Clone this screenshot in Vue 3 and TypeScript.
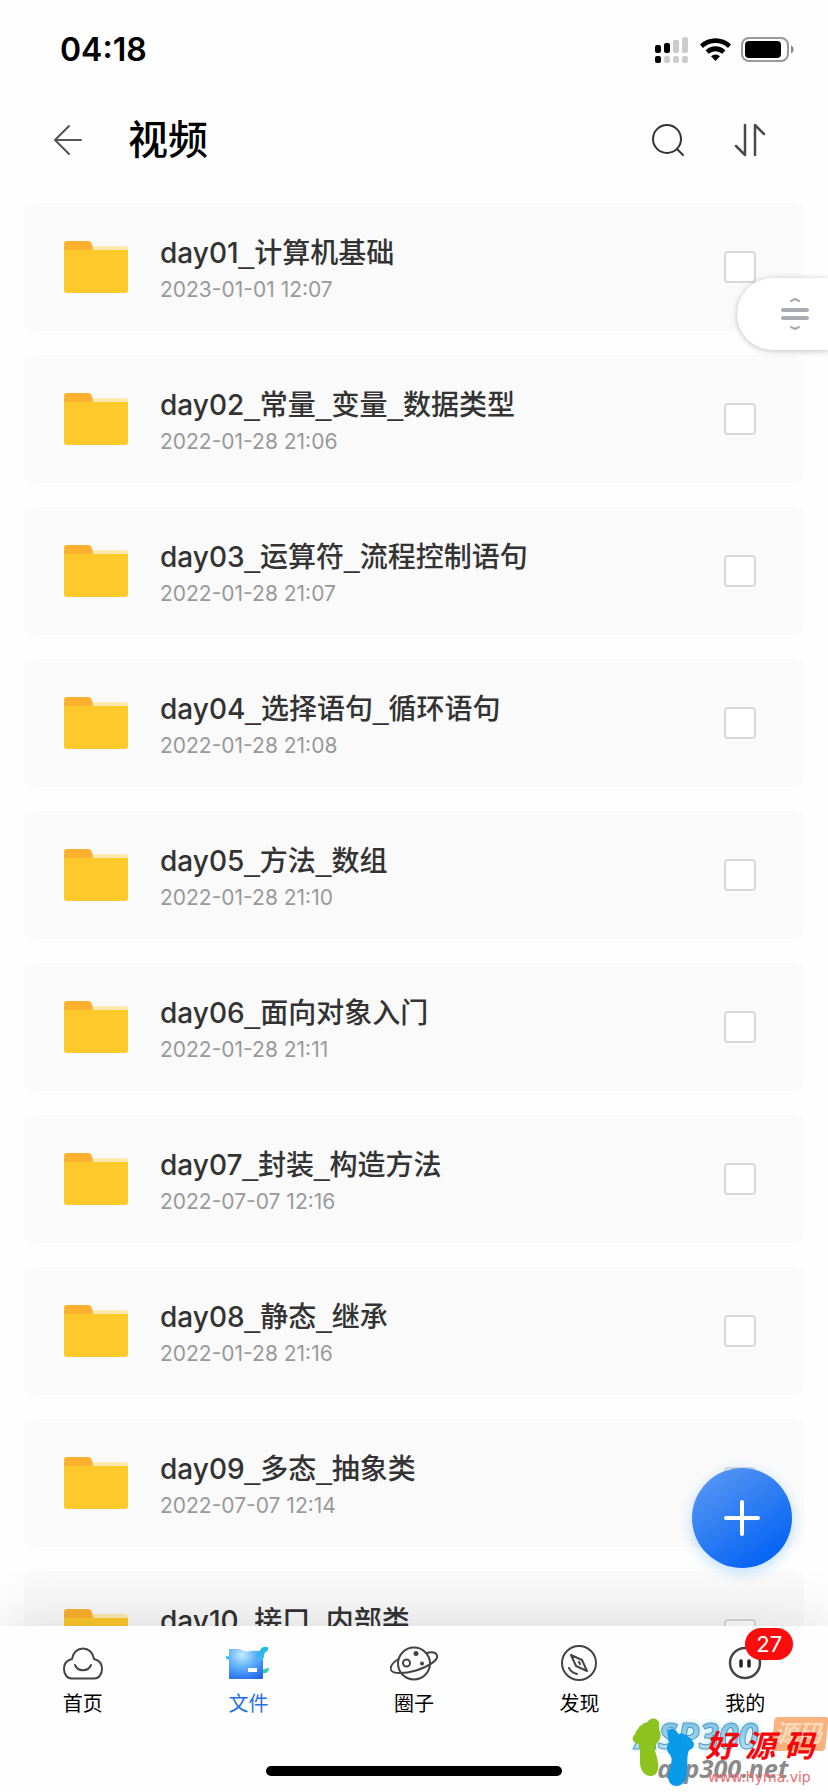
<script setup lang="ts">
import { ref } from 'vue'

interface Folder {
  name: string
  date: string
  checked: boolean
}

const folders = ref<Folder[]>([
  { name: 'day01_计算机基础', date: '2023-01-01 12:07', checked: false },
  { name: 'day02_常量_变量_数据类型', date: '2022-01-28 21:06', checked: false },
  { name: 'day03_运算符_流程控制语句', date: '2022-01-28 21:07', checked: false },
  { name: 'day04_选择语句_循环语句', date: '2022-01-28 21:08', checked: false },
  { name: 'day05_方法_数组', date: '2022-01-28 21:10', checked: false },
  { name: 'day06_面向对象入门', date: '2022-01-28 21:11', checked: false },
  { name: 'day07_封装_构造方法', date: '2022-07-07 12:16', checked: false },
  { name: 'day08_静态_继承', date: '2022-01-28 21:16', checked: false },
  { name: 'day09_多态_抽象类', date: '2022-07-07 12:14', checked: false },
  { name: 'day10_接口_内部类', date: '', checked: false },
])

// Splits a name into words and the underscores between them.
const parts = (name: string): string[] => name.split(/(_)/)

const tabs = [
  { id: 'home', label: '首页' },
  { id: 'files', label: '文件' },
  { id: 'circle', label: '圈子' },
  { id: 'discover', label: '发现' },
  { id: 'mine', label: '我的' },
]
const active = ref('files')
const unread = 27
</script>

<template>
  <div class="app">
    <div class="status">
      <span class="clock">04:18</span>
      <svg class="status-icons" width="140" height="28" viewBox="0 0 140 28" aria-hidden="true">
        <rect x="1" y="9" width="6" height="8" rx="2" />
        <rect x="10" y="7" width="6" height="10" rx="2" />
        <rect x="19" y="4" width="6" height="13" rx="2" fill="#ccc" />
        <rect x="28" y="1" width="6" height="16" rx="2" fill="#ccc" />
        <rect x="1" y="20" width="6" height="7" rx="2" />
        <g fill="#ccc">
          <rect x="10" y="20" width="6" height="7" rx="2.5" />
          <rect x="19" y="20" width="6" height="7" rx="2.5" />
          <rect x="28" y="20" width="6" height="7" rx="2.5" />
        </g>
        <path d="M46 8.6a22 22 0 0 1 31 0l-3 3.4a18 18 0 0 0-25 0z" />
        <path d="M51.6 14.4a14 14 0 0 1 19.8 0l-3.2 3.4a10 10 0 0 0-13.4 0z" />
        <path d="M57 20.2a7 7 0 0 1 9 0l-4.5 4.9z" />
        <rect x="88" y="2" width="46" height="23" rx="7" fill="none" stroke="#999" stroke-width="2" />
        <rect x="91" y="5" width="36" height="17" rx="4" />
        <path d="M137 9.500c3.400 1.200 3.400 6.800 0 8z" fill="#888" />
      </svg>
    </div>

    <header class="bar">
      <button class="icon-btn" aria-label="返回">
        <svg width="32" height="36" viewBox="0 0 32 36" fill="none" stroke="#555" stroke-width="2" stroke-linecap="round" stroke-linejoin="round">
          <path d="M17 4 3 18l14 14M3 18h26" />
        </svg>
      </button>
      <h1>视频</h1>
      <div class="actions">
        <button class="icon-btn" aria-label="搜索">
          <svg width="32" height="36" viewBox="0 0 32 36" fill="none" stroke="#333" stroke-width="2" stroke-linecap="round">
            <circle cx="15" cy="17" r="14" /><path d="m25 27 6 6" />
          </svg>
        </button>
        <button class="icon-btn" aria-label="排序">
          <svg width="32" height="36" viewBox="0 0 32 36" fill="none" stroke="#4a4a4a" stroke-width="2.5" stroke-linecap="round" stroke-linejoin="round">
            <path d="M11 3v30l-9-9M21 33V3l9 9" />
          </svg>
        </button>
      </div>
    </header>

    <main class="content">
      <ul class="list">
        <li v-for="(f, i) in folders" :key="f.name" class="card">
          <svg class="folder" width="64" height="52" viewBox="0 0 64 52" aria-hidden="true">
            <path d="M22 5h39a3 3 0 0 1 3 3v8H22z" fill="#ffe9b0" />
            <path d="M0 14V3a3 3 0 0 1 3-3h21q3 0 3.800 3L30 13z" fill="#fdb22f" />
            <path d="M0 9h64v40a3 3 0 0 1-3 3H3a3 3 0 0 1-3-3z" fill="#fdc92b" />
          </svg>
          <label :for="'f' + i" class="info">
            <span class="name"><span v-for="(p, k) in parts(f.name)" :key="k" :class="{ sep: p === '_' }">{{ p }}</span></span>
            <span class="date">{{ f.date }}</span>
          </label>
          <input :id="'f' + i" v-model="f.checked" type="checkbox" class="check" />
        </li>
      </ul>
    </main>

    <button class="scroller" aria-label="快速滚动">
      <svg width="28" height="32" viewBox="0 0 28 32" fill="none" stroke="#a9abb3" stroke-linecap="round" stroke-linejoin="round" aria-hidden="true">
        <path d="M2 12h24M2 20h24" stroke-width="4" />
        <path d="m10 3 4-2 4 2M10 29l4 2 4-2" stroke-width="2" />
      </svg>
    </button>

    <button class="fab" aria-label="添加">
      <svg width="36" height="36" viewBox="0 0 36 36" stroke="#fff" stroke-width="4" stroke-linecap="round" aria-hidden="true">
        <path d="M18 2v32M2 18h32" />
      </svg>
    </button>

    <nav class="nav">
      <div class="tabs">
        <button v-for="t in tabs" :key="t.id" class="tab" :class="{ on: active === t.id }" @click="active = t.id">
          <span class="tab-icon">
            <svg v-if="t.id === 'home'" width="48" height="36" viewBox="0 0 48 36" class="line">
              <path d="M12.500 33.500h23c4.500 0 7.500-4.500 7.500-9.500 0-5.500-3.500-9-8-10C34 7.500 29.500 3.500 24 3.500S14 7.500 13 14c-4.500 1-8 4.500-8 10 0 5 3 9.500 7.500 9.500z" />
              <path d="M16 20c3 7 13 7 16 0" />
            </svg>
            <svg v-else-if="t.id === 'files'" width="48" height="36" viewBox="0 0 48 36">
              <defs>
                <radialGradient id="fileBody" cx=".38" cy=".2" r=".9">
                  <stop offset="0" stop-color="#c4ecff" /><stop offset=".45" stop-color="#62b2fa" /><stop offset="1" stop-color="#2465f0" />
                </radialGradient>
                <linearGradient id="fileTail" x1="0" y1="0" x2="0" y2="1">
                  <stop offset="0" stop-color="#18bfe0" /><stop offset="1" stop-color="#4fb0fb" />
                </linearGradient>
              </defs>
              <path d="M2 11q4 1 7 0v4q-5 0-7-2z" fill="#18bfe8" />
              <path d="M38 25c3-1 4-2 7-2 0 4-3 6-7 5z" fill="#31d3a5" />
              <path d="M5 5q0-1 1-1h10q4 3 8 2.500Q31 5 39 7v26q0 1-1 1H6q-1 0-1-1z" fill="url(#fileBody)" />
              <path d="M32 9c4 0 3-6 8-7 3-.5 5 0 4 3-1 2-4 2-4 6 0 3-2 5-4 5-3 0-5-4-4-7z" fill="url(#fileTail)" />
              <rect x="24" y="23" width="9" height="4" fill="#fff" />
            </svg>
            <svg v-else-if="t.id === 'circle'" width="48" height="36" viewBox="0 0 48 36" class="line">
              <circle cx="24" cy="18.500" r="16" />
              <path d="M8.500 14C2 18 0 22 1 25c1.500 4 13 4 25 .5S48.500 15 47 10.500C46 7 42 6.500 36.500 8" />
              <circle cx="16.500" cy="18" r="3.500" />
              <circle cx="26" cy="8.500" r="2.500" fill="#444" stroke="none" />
              <circle cx="32" cy="18.500" r="2" fill="#444" stroke="none" />
            </svg>
            <svg v-else-if="t.id === 'discover'" width="48" height="36" viewBox="0 0 48 36" class="line">
              <circle cx="23" cy="18" r="17" />
              <path d="m15 10 11 5 5 11-11-5zM23 17l1 2M13 23c2 4 4 5 8 6" />
            </svg>
            <svg v-else width="48" height="36" viewBox="0 0 48 36" class="line">
              <circle cx="24" cy="18" r="15" stroke-width="2.5" />
              <path d="M20 16v5M28 16v5" stroke="#222" stroke-width="3.5" />
            </svg>
            <span v-if="t.id === 'mine'" class="badge">{{ unread }}</span>
          </span>
          <span>{{ t.label }}</span>
        </button>
      </div>
      <div class="home-indicator"></div>
    </nav>

    <svg class="mark" width="200" height="82" viewBox="24 15 600 246" aria-hidden="true">
      <defs>
        <linearGradient id="logoSky" x1="0" y1="0" x2="0" y2="1">
          <stop offset="0" stop-color="#67b5df" /><stop offset="1" stop-color="#c8ecf8" />
        </linearGradient>
      </defs>
      <text x="46" y="131" class="mark-title" fill="url(#logoSky)" stroke="#5d99bd" stroke-width="3">ASP300</text>
      <path d="M474 36h142q10 0 9 11l-9 81q-2 10-12 10H464q-12 0-10-11l9-81q1-10 11-10z" fill="#f8b27d" />
      <text x="462" y="111" class="mark-tag">源码</text>
      <text x="112" y="220" class="mark-site">asp300.net</text>
      <path d="M38 99q1-9 8-12 0-10 9-15 2-10 11-12 5-8 15-6 4-10 14-13c12-4 26 7 22 20q-2 7 1 13c4 9 6 22 0 31-5 8-12 13-13 23-2 14 10 30 10 54 0 17-7 30-23 31-19 0-30-16-32-38-1-18 2-39-4-58-9-3-19-7-18-18z" fill="#8cc31f" />
      <path d="M143 82c0-12 14-14 22-8 6 4 8 10 12 14q7-7 14 0 10-1 13 8 11 2 13 13 8 6 3 16c-3 7-11 8-14 13-5 16-4 28-4 48 0 32-8 55-31 57-19 1-29-16-27-34 2-20 14-34 10-51-3-11-12-14-13-26-1-9 2-14 8-20-5-8-7-20-6-30z" fill="#0a9be8" />
      <g class="mark-red">
        <text x="256" y="156">好</text><text x="374" y="156">源</text><text x="492" y="156">码</text>
      </g>
      <text x="265" y="230" class="mark-url">www.hyma.vip</text>
    </svg>
  </div>
</template>

<style>
body {
  margin: 0;
  background: #fff;
}
</style>

<style scoped>
.app {
  position: relative;
  display: flex;
  flex-direction: column;
  height: 100vh;
  overflow: hidden;
  background: #fefefe;
  color: #000;
  font-family: Inter, "Noto Sans CJK SC", sans-serif;
}
button {
  border: 0;
  padding: 0;
  background: none;
  font: inherit;
  color: inherit;
  cursor: pointer;
}
svg {
  display: block;
  flex: none;
}
.status {
  display: flex;
  align-items: center;
  justify-content: space-between;
  height: 100px;
  padding: 0 34px 0 60px;
}
.clock {
  font-size: 32px;
  font-weight: 600;
  line-height: 40px;
}
.bar {
  display: flex;
  align-items: center;
  height: 80px;
  padding: 0 62px 0 52px;
}
.bar h1 {
  margin: 0 0 0 44px;
  font-size: 40px;
  line-height: 56px;
  font-weight: 500;
}
.actions {
  display: flex;
  gap: 50px;
  margin-left: auto;
}
.content {
  flex: 1;
  min-height: 0;
  overflow: hidden;
  padding: 23px 24px 0;
}
.list {
  display: flex;
  flex-direction: column;
  gap: 24px;
  margin: 0;
  padding: 0;
  list-style: none;
}
.card {
  display: flex;
  align-items: center;
  height: 128px;
  padding: 0 48px 0 40px;
  box-sizing: border-box;
  flex: none;
  border-radius: 10px;
  background: #fafafa;
}
.info {
  display: flex;
  flex: 1;
  flex-direction: column;
  gap: 4px;
  margin-left: 32px;
  padding-top: 4px;
}
.name {
  font-size: 28px;
  line-height: 36px;
  font-weight: 500;
  color: #333;
}
.sep {
  font-family: "Liberation Sans", sans-serif;
}
.date {
  min-height: 28px;
  font-size: 21px;
  line-height: 28px;
  color: #999;
}
.check {
  appearance: none;
  width: 32px;
  height: 32px;
  margin: 0;
  border: 2px solid #d8d8d8;
  border-radius: 4px;
  background: #fff;
}
.check:checked {
  background: #1677ff;
}
.scroller {
  position: absolute;
  top: 278px;
  right: 0;
  display: flex;
  align-items: center;
  width: 91px;
  height: 72px;
  padding-left: 44px;
  border-radius: 36px 0 0 36px;
  background: #fff;
  box-shadow: 0 1px 6px rgba(0, 0, 0, 0.25);
}
.fab {
  position: absolute;
  right: 36px;
  bottom: 224px;
  display: grid;
  place-items: center;
  width: 100px;
  height: 100px;
  border-radius: 50%;
  background: linear-gradient(145deg, #5a98f5 5%, #2c7bf3 50%, #0062f5 90%);
  box-shadow: 0 4px 14px rgba(40, 150, 255, 0.3);
}
.nav {
  position: relative;
  display: flex;
  flex-direction: column;
  justify-content: space-between;
  height: 166px;
  box-sizing: border-box;
  padding: 19px 0 16px;
  background: #fefefe;
  box-shadow: 0 0 64px rgba(0, 0, 0, 0.14);
}
.tabs {
  display: flex;
}
.tab {
  display: flex;
  flex: 1;
  flex-direction: column;
  align-items: center;
  gap: 9px;
  font-size: 20px;
  line-height: 28px;
}
.tab.on {
  color: #1f6fe5;
}
.tab-icon {
  position: relative;
}
.line {
  fill: none;
  stroke: #444;
  stroke-width: 2;
  stroke-linecap: round;
  stroke-linejoin: round;
}
.badge {
  position: absolute;
  top: -17px;
  left: 24px;
  width: 48px;
  border-radius: 16px;
  background: #fb0d0d;
  color: #fff;
  font-size: 22px;
  line-height: 32px;
  text-align: center;
}
.home-indicator {
  align-self: center;
  width: 296px;
  height: 10px;
  border-radius: 5px;
  background: #000;
}
.mark {
  position: absolute;
  right: 0;
  bottom: 0;
  pointer-events: none;
}
.mark-title {
  font: italic 700 108px "Open Sans", sans-serif;
  stroke-linejoin: round;
  filter: drop-shadow(0 0 8px #b4ebf8);
}
.mark-tag {
  font: italic 700 72px "Noto Sans CJK SC", sans-serif;
  fill: #fbd9bd;
}
.mark-site {
  font: italic 700 76px "Open Sans", sans-serif;
  fill: #8a8a8a;
}
.mark-red {
  font: italic 700 92px "Noto Sans CJK SC", sans-serif;
  fill: #f5060d;
}
.mark-url {
  font: 42px "DejaVu Sans", sans-serif;
  fill: #f26a70;
}
</style>
